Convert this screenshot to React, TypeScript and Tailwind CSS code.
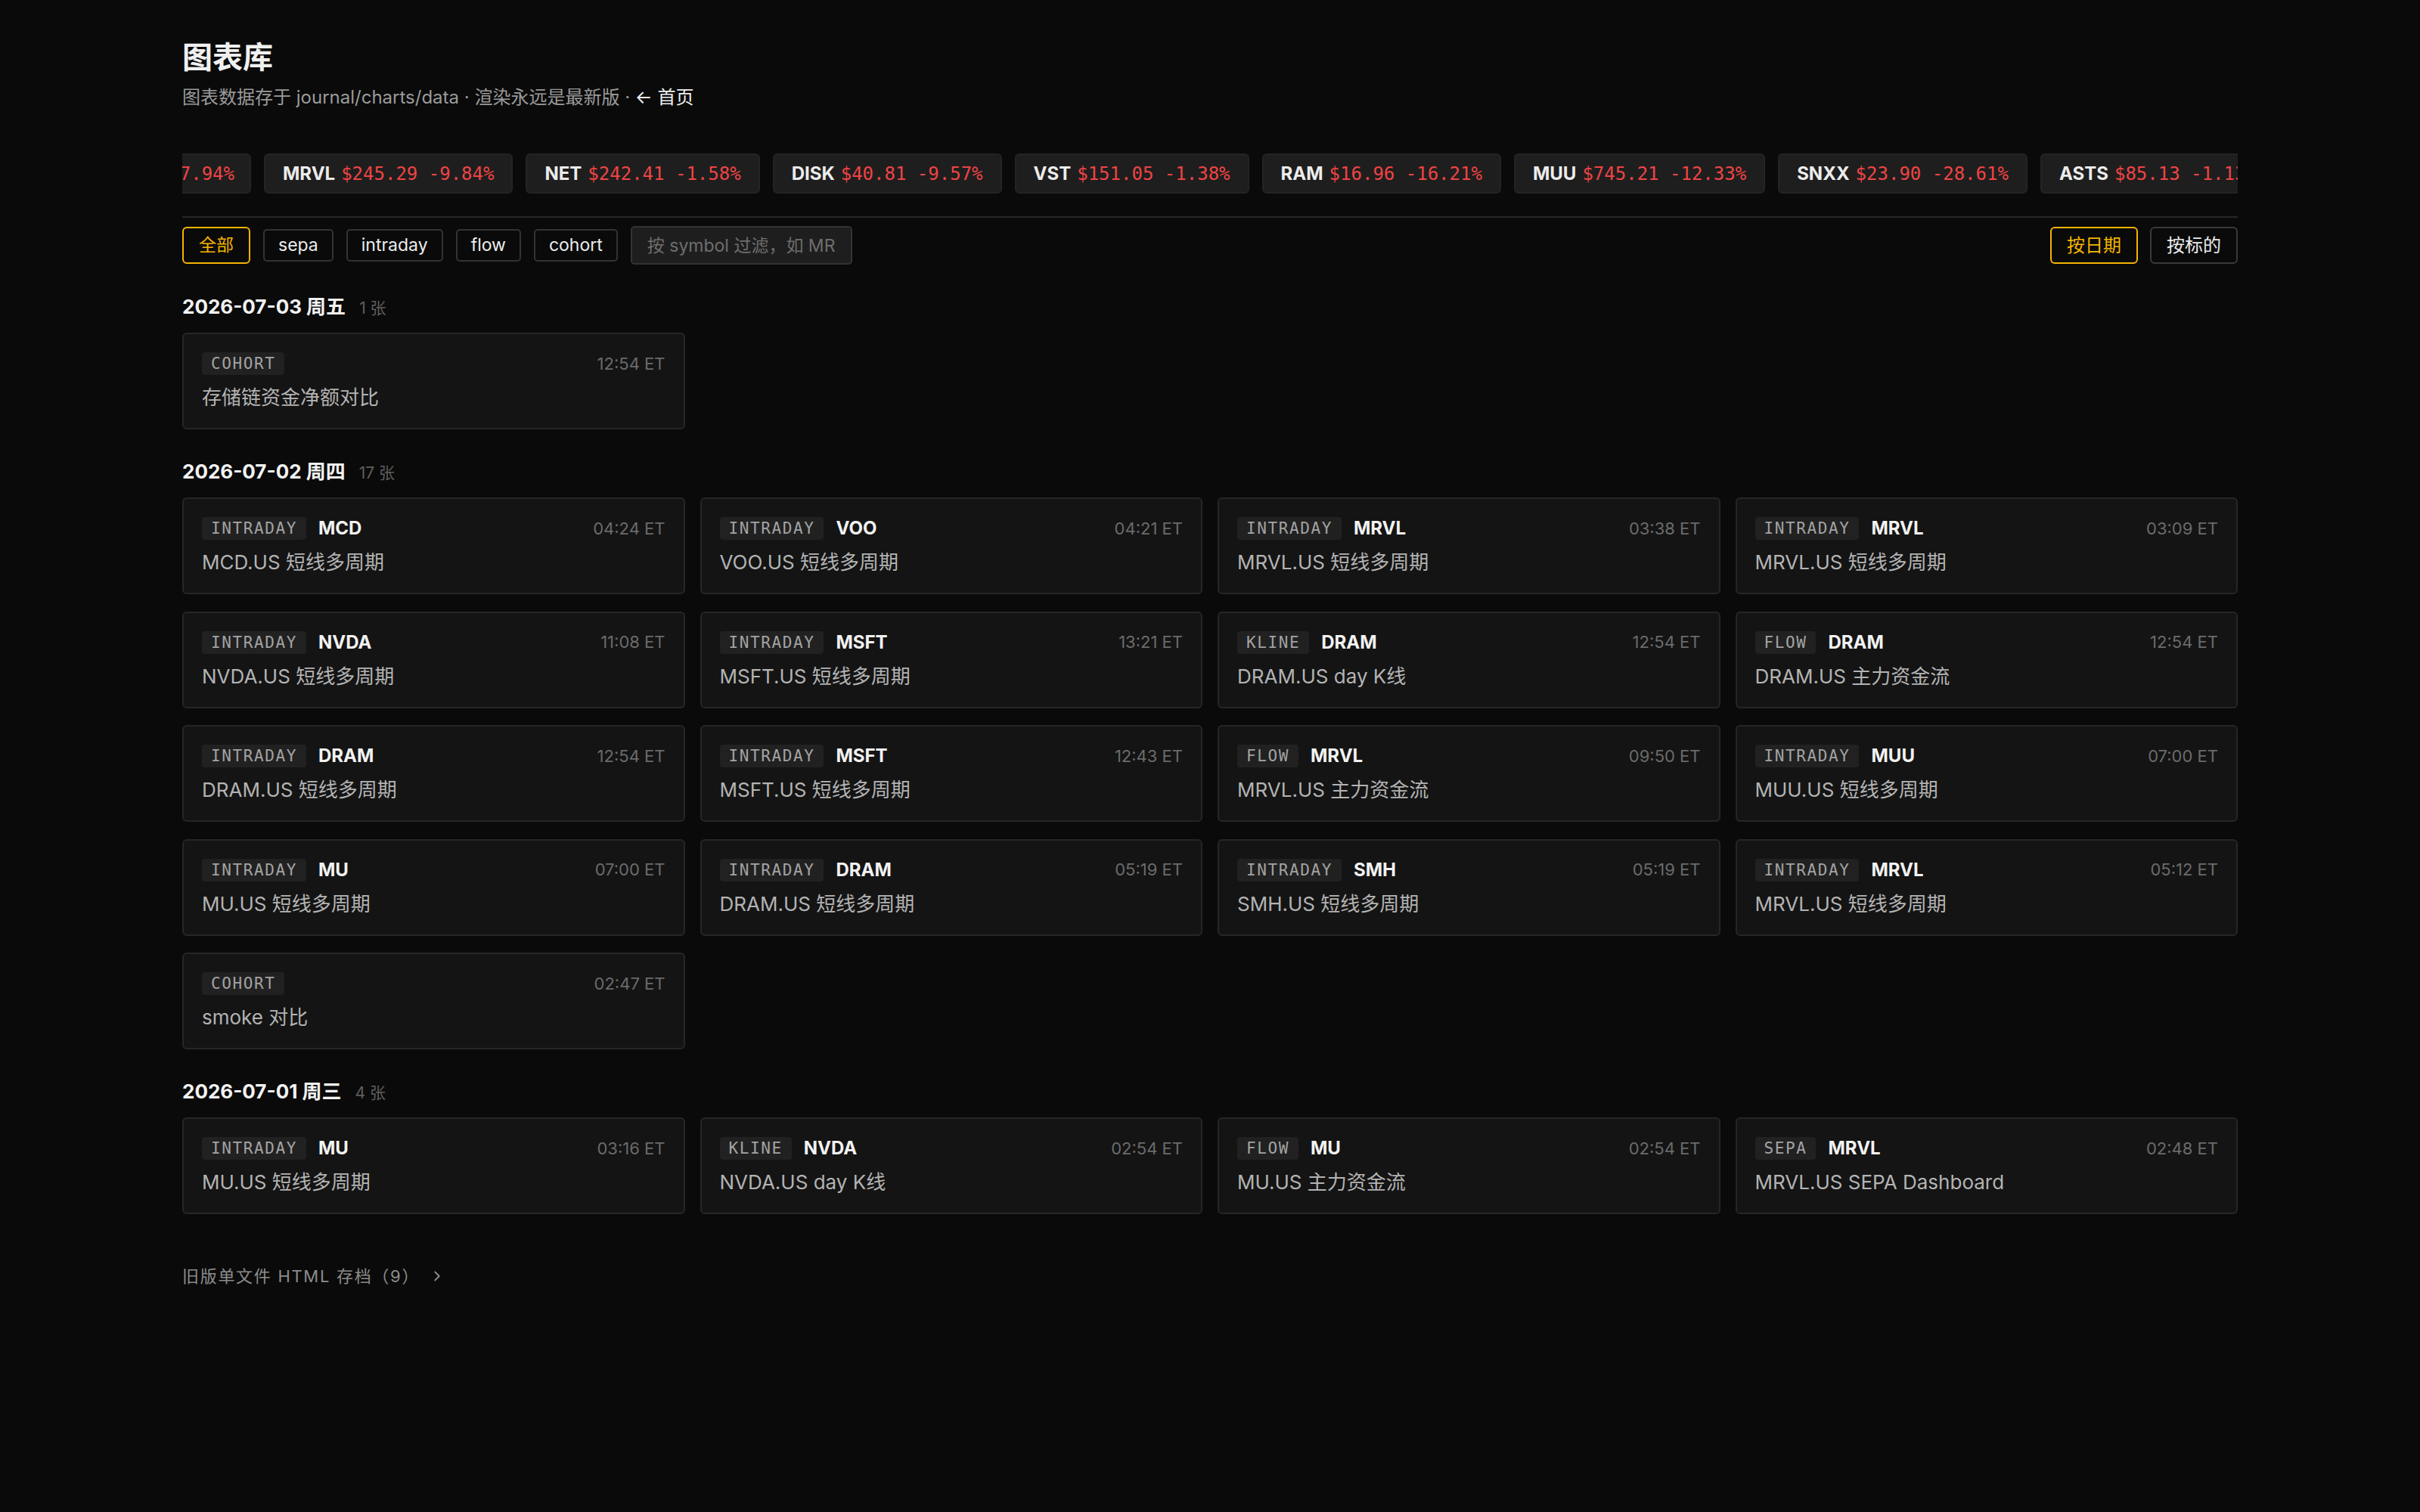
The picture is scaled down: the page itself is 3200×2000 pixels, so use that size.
import React from "react";
import { ChevronRight } from "lucide-react";

type Card = { type: string; sym?: string; time: string; title: string };

const ticker = [
  { s: "MRVL", p: "$245.29", c: "-9.84%" },
  { s: "NET", p: "$242.41", c: "-1.58%" },
  { s: "DISK", p: "$40.81", c: "-9.57%" },
  { s: "VST", p: "$151.05", c: "-1.38%" },
  { s: "RAM", p: "$16.96", c: "-16.21%" },
  { s: "MUU", p: "$745.21", c: "-12.33%" },
  { s: "SNXX", p: "$23.90", c: "-28.61%" },
  { s: "ASTS", p: "$85.13", c: "-1.13%" },
  { s: "MU", p: "$412.80", c: "-7.02%" },
];

const sections: { date: string; count: string; cards: Card[] }[] = [
  {
    date: "2026-07-03 周五",
    count: "1 张",
    cards: [{ type: "COHORT", time: "12:54 ET", title: "存储链资金净额对比" }],
  },
  {
    date: "2026-07-02 周四",
    count: "17 张",
    cards: [
      { type: "INTRADAY", sym: "MCD", time: "04:24 ET", title: "MCD.US 短线多周期" },
      { type: "INTRADAY", sym: "VOO", time: "04:21 ET", title: "VOO.US 短线多周期" },
      { type: "INTRADAY", sym: "MRVL", time: "03:38 ET", title: "MRVL.US 短线多周期" },
      { type: "INTRADAY", sym: "MRVL", time: "03:09 ET", title: "MRVL.US 短线多周期" },
      { type: "INTRADAY", sym: "NVDA", time: "11:08 ET", title: "NVDA.US 短线多周期" },
      { type: "INTRADAY", sym: "MSFT", time: "13:21 ET", title: "MSFT.US 短线多周期" },
      { type: "KLINE", sym: "DRAM", time: "12:54 ET", title: "DRAM.US day K线" },
      { type: "FLOW", sym: "DRAM", time: "12:54 ET", title: "DRAM.US 主力资金流" },
      { type: "INTRADAY", sym: "DRAM", time: "12:54 ET", title: "DRAM.US 短线多周期" },
      { type: "INTRADAY", sym: "MSFT", time: "12:43 ET", title: "MSFT.US 短线多周期" },
      { type: "FLOW", sym: "MRVL", time: "09:50 ET", title: "MRVL.US 主力资金流" },
      { type: "INTRADAY", sym: "MUU", time: "07:00 ET", title: "MUU.US 短线多周期" },
      { type: "INTRADAY", sym: "MU", time: "07:00 ET", title: "MU.US 短线多周期" },
      { type: "INTRADAY", sym: "DRAM", time: "05:19 ET", title: "DRAM.US 短线多周期" },
      { type: "INTRADAY", sym: "SMH", time: "05:19 ET", title: "SMH.US 短线多周期" },
      { type: "INTRADAY", sym: "MRVL", time: "05:12 ET", title: "MRVL.US 短线多周期" },
      { type: "COHORT", time: "02:47 ET", title: "smoke 对比" },
    ],
  },
  {
    date: "2026-07-01 周三",
    count: "4 张",
    cards: [
      { type: "INTRADAY", sym: "MU", time: "03:16 ET", title: "MU.US 短线多周期" },
      { type: "KLINE", sym: "NVDA", time: "02:54 ET", title: "NVDA.US day K线" },
      { type: "FLOW", sym: "MU", time: "02:54 ET", title: "MU.US 主力资金流" },
      { type: "SEPA", sym: "MRVL", time: "02:48 ET", title: "MRVL.US SEPA Dashboard" },
    ],
  },
];

function ChartCard({ c }: { c: Card }) {
  return (
    <div className="rounded-[6px] border-2 border-[#262626] bg-[#141414] px-[24px] pt-[24px] pb-[22px]">
      <div className="flex h-[30px] items-center">
        <span className="rounded-[4px] bg-[#212121] px-[12px] font-['DejaVu_Sans_Mono',monospace] text-[21px] leading-[30px] tracking-[1.6px] text-[#a3a3a3]">
          {c.type}
        </span>
        {c.sym && (
          <span className="ml-[16px] text-[24px] font-bold text-[#f2f2f2]">{c.sym}</span>
        )}
        <span className="ml-auto text-[22px] text-[#6b6b6b]">{c.time}</span>
      </div>
      <div className="mt-[12px] text-[26px] leading-[36px] text-[#b3b3b3]">{c.title}</div>
    </div>
  );
}

export default function App() {
  return (
    <div className="min-h-screen w-full bg-[#0a0a0a] font-['Inter','Noto_Sans_CJK_SC',sans-serif] text-[#e5e5e5]">
      <div className="px-[241px] pt-[52px] pb-[80px]">
        <h1 className="text-[40px] font-bold leading-[48px] text-[#f0f0f0]">图表库</h1>
        <p className="mt-[13px] text-[24px] leading-[32px] text-[#9a9a9a]">
          图表数据存于 journal/charts/data · 渲染永远是最新版 ·{" "}
          <span className="text-[#f0f0f0]">← 首页</span>
        </p>

        {/* ticker */}
        <div className="mt-[58px] overflow-hidden border-b-2 border-[#262626] pb-[30px]">
          <div className="flex gap-[17px]">
            <div className="-ml-[209px] flex h-[53px] w-[300px] shrink-0 items-center justify-end overflow-hidden whitespace-nowrap rounded-[6px] border-2 border-[#242424] bg-[#1e1e1e] pr-[20px] text-[24px]">
              <span className="font-bold text-[#ececec]">AAOI</span>
              <span className="ml-[8px] font-['DejaVu_Sans_Mono',monospace] text-[#ef4444]">$112.40 -7.94%</span>
            </div>
            {ticker.map((t) => (
              <div
                key={t.s + t.p}
                className="flex h-[53px] shrink-0 items-center whitespace-nowrap rounded-[6px] border-2 border-[#242424] bg-[#1e1e1e] px-[23px] text-[24px]"
              >
                <span className="font-bold text-[#ececec]">{t.s}</span>
                <span className="ml-[8px] font-['DejaVu_Sans_Mono',monospace] text-[#ef4444]">
                  {t.p} {t.c}
                </span>
              </div>
            ))}
          </div>
        </div>

        {/* filters */}
        <div className="mt-[11px] flex h-[51px] items-center">
          <div className="flex items-center gap-[17px]">
            <button className="flex h-[49px] items-center rounded-[6px] border-2 border-[#f5b400] px-[20px] text-[23px] text-[#f5b400]">
              全部
            </button>
            {["sepa", "intraday", "flow", "cohort"].map((f) => (
              <button
                key={f}
                className="flex h-[43px] items-center rounded-[5px] border-2 border-[#333333] px-[18px] text-[23px] text-[#ececec]"
              >
                {f}
              </button>
            ))}
            <input
              className="h-[51px] w-[293px] rounded-[5px] border-2 border-[#333333] bg-[#1e1e1e] px-[20px] text-[23px] text-[#ececec] outline-none placeholder:text-[#6e6e6e]"
              placeholder="按 symbol 过滤，如 MRVL"
            />
          </div>
          <div className="ml-auto flex items-center gap-[16px]">
            <button className="flex h-[49px] w-[116px] items-center justify-center rounded-[6px] border-2 border-[#f5b400] text-[24px] text-[#f5b400]">
              按日期
            </button>
            <button className="flex h-[49px] w-[116px] items-center justify-center rounded-[6px] border-2 border-[#3a3a3a] text-[24px] text-[#ececec]">
              按标的
            </button>
          </div>
        </div>

        {/* sections */}
        <div className="mt-[36px] flex flex-col gap-[36px]">
          {sections.map((s) => (
            <section key={s.date}>
              <div className="flex items-baseline gap-[18px] leading-[40px]">
                <h2 className="text-[26px] font-bold text-[#f2f2f2]">{s.date}</h2>
                <span className="text-[21px] text-[#5f5f5f]">{s.count}</span>
              </div>
              <div className="mt-[12px] grid grid-cols-4 gap-x-[20px] gap-y-[22.5px]">
                {s.cards.map((c, i) => (
                  <ChartCard key={i} c={c} />
                ))}
              </div>
            </section>
          ))}
        </div>

        <div className="mt-[67px] flex items-center text-[22px] leading-[30px] tracking-[1.7px] text-[#8c8c8c]">
          <span>旧版单文件 HTML 存档（9）</span>
          <ChevronRight className="ml-[12px] h-[22px] w-[22px] text-[#8c8c8c]" strokeWidth={2} />
        </div>
      </div>
    </div>
  );
}
